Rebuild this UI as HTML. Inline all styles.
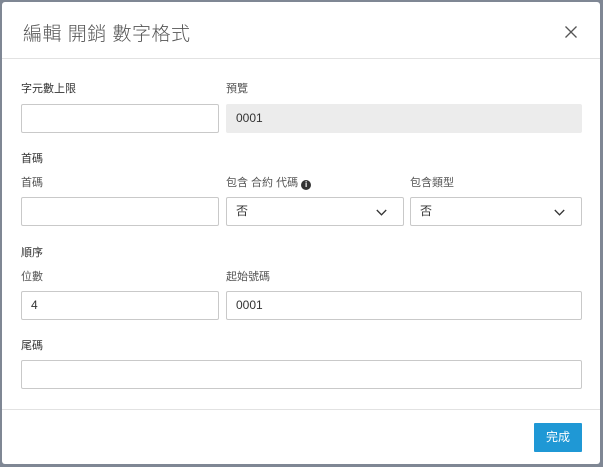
<!DOCTYPE html>
<html><head><meta charset="utf-8"><style>
*{box-sizing:border-box;margin:0;padding:0}
body{width:603px;height:467px;background:#7f8794;position:relative;overflow:hidden;font-family:"Liberation Sans","Noto Sans CJK TC",sans-serif}
.dlg{position:absolute;left:2px;top:2px;width:598px;height:462px;background:#fff;border-radius:3px}
.a{position:absolute}
.t{left:21px;top:17px;font-size:19px;color:#555;font-weight:300;letter-spacing:0.5px}
.hr{height:1px;background:#e2e2e2;left:0;width:598px}
.lab{font-size:11px;color:#555}
.sec{font-size:11px;color:#333}
.in{height:29px;border:1px solid #c9c9c9;border-radius:2px;background:#fff;font-size:12px;color:#333;padding-left:9px;line-height:27px}
.pre{background:#ececec;border-color:#ececec}
.chev{position:absolute;right:16px;top:11px}
.btn{left:532px;top:421px;width:48px;height:29px;background:#1f98d5;color:#fff;font-size:12px;text-align:center;line-height:29px;border-radius:1px}
</style></head><body>
<div class="dlg">
<div class="a t">編輯 開銷 數字格式</div>
<svg class="a" style="left:562px;top:23px" width="14" height="14" viewBox="0 0 14 14"><path d="M1.5 1.5L12.5 12.5M12.5 1.5L1.5 12.5" stroke="#555" stroke-width="1.3"/></svg>
<div class="a hr" style="top:56px"></div>

<div class="a sec" style="left:19px;top:78px">字元數上限</div>
<div class="a lab" style="left:224px;top:78px">預覽</div>
<div class="a in" style="left:19px;top:102px;width:198px"></div>
<div class="a in pre" style="left:224px;top:102px;width:356px">0001</div>

<div class="a sec" style="left:19px;top:148px">首碼</div>
<div class="a lab" style="left:19px;top:172px">首碼</div>
<div class="a lab" style="left:224px;top:172px">包含 合約 代碼 <span style="display:inline-block;width:10px;height:10px;border-radius:50%;background:#333;color:#fff;font-size:8px;line-height:10px;text-align:center;font-weight:bold;vertical-align:-1px">i</span></div>
<div class="a lab" style="left:408px;top:172px">包含類型</div>
<div class="a in" style="left:19px;top:195px;width:198px"></div>
<div class="a in" style="left:224px;top:195px;width:178px">否<svg class="chev" width="11" height="7" viewBox="0 0 11 7"><path d="M0.8 1L5.5 5.8L10.2 1" fill="none" stroke="#333" stroke-width="1.3"/></svg></div>
<div class="a in" style="left:408px;top:195px;width:172px">否<svg class="chev" width="11" height="7" viewBox="0 0 11 7"><path d="M0.8 1L5.5 5.8L10.2 1" fill="none" stroke="#333" stroke-width="1.3"/></svg></div>

<div class="a sec" style="left:19px;top:242px">順序</div>
<div class="a lab" style="left:19px;top:266px">位數</div>
<div class="a lab" style="left:224px;top:266px">起始號碼</div>
<div class="a in" style="left:19px;top:289px;width:198px">4</div>
<div class="a in" style="left:224px;top:289px;width:356px">0001</div>

<div class="a sec" style="left:19px;top:335px">尾碼</div>
<div class="a in" style="left:19px;top:358px;width:561px"></div>

<div class="a hr" style="top:407px"></div>
<div class="a btn">完成</div>
</div>
</body></html>
